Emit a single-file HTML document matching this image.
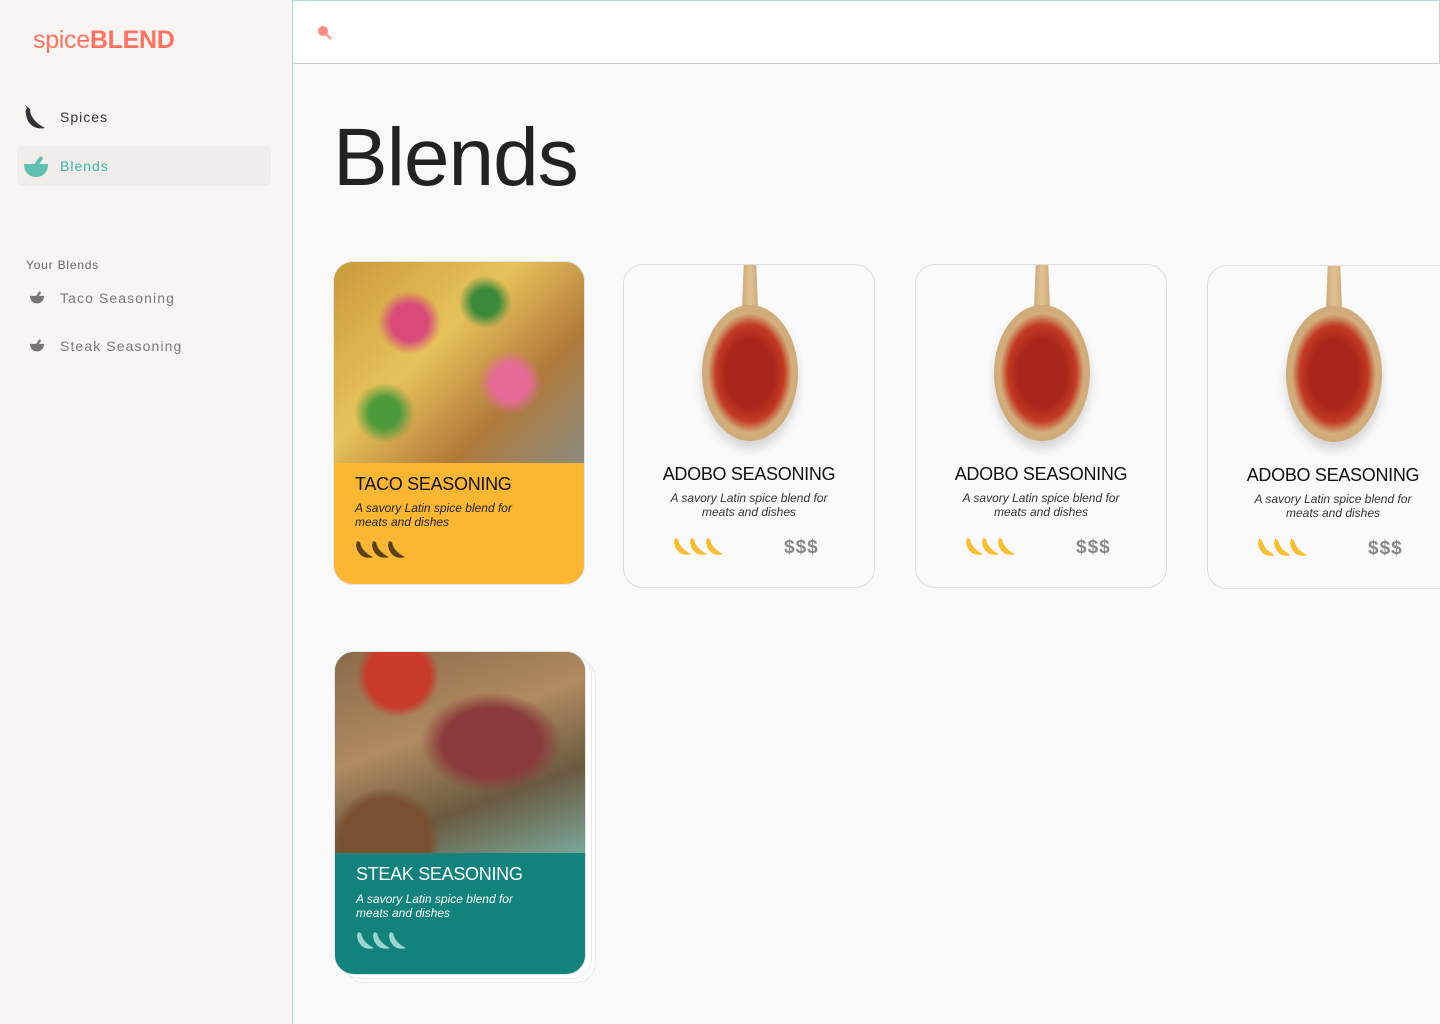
<!DOCTYPE html>
<html><head><meta charset="utf-8"><style>
*{box-sizing:border-box;margin:0;padding:0}
body{width:1440px;height:1024px;overflow:hidden;background:#F9F9F9;font-family:"Liberation Sans",Arial,sans-serif;position:relative}
.side{position:absolute;left:0;top:0;width:293px;height:1024px;background:#F8F5F3;border-right:1px solid #A6DCD9}
.logo{position:absolute;left:33px;top:26px;font-size:25px;color:#FF7262;letter-spacing:-0.3px}
.logo b{font-weight:bold}
.nav{position:absolute;left:17px;width:254px;height:40px;border-radius:4px;display:flex;align-items:center;font-size:14px;letter-spacing:1px}
.nav span{position:absolute;left:43px}
.sub{position:absolute;left:60px;font-size:14px;color:#7a7a7a;letter-spacing:1.1px}
.search{position:absolute;left:293px;top:0;width:1147px;height:64px;background:#fff;border-top:1px solid #A6DCD9;border-right:1px solid #ccc;border-bottom:1px solid #ccc}
h1{position:absolute;left:333px;top:111px;font-size:82px;font-weight:normal;color:#222;letter-spacing:-1px}
.card{position:absolute;width:252px;height:324px;border-radius:20px;overflow:hidden;border:1px solid #ddd;background:#FAFAFA}
.card .t{position:absolute;left:0;width:100%;text-align:center;font-size:18px;color:#111;letter-spacing:-0.3px}
.card .d{position:absolute;left:0;width:100%;text-align:center;font-size:12px;font-style:italic;color:#333;line-height:14px}
.img .t,.img .d{text-align:left;left:21px}
.spoon{position:absolute;left:76px;top:0;width:100px;height:180px}
.dol{position:absolute;left:160px;font-size:19px;font-weight:bold;color:#888;letter-spacing:1px}
.chs{position:absolute;left:50px}
</style></head><body>
<div class="side">
 <div class="logo">spice<b>BLEND</b></div>
 <div class="nav" style="top:97px;color:#333">
  <svg style="position:absolute;left:6px" width="24" height="26" viewBox="0 0 24 26"><path d="M2 1 L7 5 C7 12 12 19 22 24 C13 26 4 21 3 10 C2 7 3 5 4 5 Z" fill="#333"/></svg><span>Spices</span></div>
 <div class="nav" style="top:146px;background:#F0EDEA;color:#3BB4A4">
  <svg style="position:absolute;left:6px" width="26" height="24" viewBox="0 0 26 24"><path d="M1 10 H25 C25 18 20 23 13 23 C6 23 1 18 1 10Z" fill="#5EC0B1"/><rect x="14" y="2" width="4" height="11" rx="2" transform="rotate(35 16 7)" fill="#5EC0B1"/></svg><span>Blends</span></div>
 <div style="position:absolute;left:26px;top:258px;font-size:12px;color:#666;letter-spacing:.8px">Your Blends</div>
 <svg style="position:absolute;left:29px;top:290px" width="16" height="14" viewBox="0 0 26 24"><path d="M1 10 H25 C25 18 20 23 13 23 C6 23 1 18 1 10Z" fill="#777"/><rect x="14" y="2" width="4" height="11" rx="2" transform="rotate(35 16 7)" fill="#777"/></svg>
 <div class="sub" style="top:290px">Taco Seasoning</div>
 <svg style="position:absolute;left:29px;top:338px" width="16" height="14" viewBox="0 0 26 24"><path d="M1 10 H25 C25 18 20 23 13 23 C6 23 1 18 1 10Z" fill="#777"/><rect x="14" y="2" width="4" height="11" rx="2" transform="rotate(35 16 7)" fill="#777"/></svg>
 <div class="sub" style="top:338px">Steak Seasoning</div>
</div>
<div class="search"><svg style="position:absolute;left:23px;top:23px" width="18" height="18" viewBox="0 0 18 18"><circle cx="7" cy="7" r="5" fill="#FF8A7E"/><path d="M10 10 L15 15" stroke="#FF8A7E" stroke-width="2"/></svg></div>
<h1>Blends</h1>

<!-- taco -->
<div class="card img" style="left:333px;top:261px;background:#FBB732;border-color:#e5e5e5">
 <div style="position:absolute;left:0;top:0;width:252px;height:201px;background:radial-gradient(circle at 30% 30%,#d94a7a 0 8%,transparent 14%),radial-gradient(circle at 70% 60%,#e86a9a 0 8%,transparent 15%),radial-gradient(circle at 60% 20%,#3a8a3a 0 6%,transparent 12%),radial-gradient(circle at 20% 75%,#4c9a3a 0 6%,transparent 12%),linear-gradient(135deg,#c89a3a,#e7c25a 40%,#b07a3a 70%,#8a8a80)"></div>
 <div class="t" style="top:212px">TACO SEASONING</div>
 <div class="d" style="top:239px;color:#222">A savory Latin spice blend for<br>meats and dishes</div>
 <svg style="position:absolute;left:22px;top:278px" width="52" height="20" viewBox="0 0 52 20"><g fill="#5a4016"><path d="M1 1 L4 2 C5 8 9 13 17 17 C8 20 1 14 0 5Z"/><path d="M17 1 L20 2 C21 8 25 13 33 17 C24 20 17 14 16 5Z"/><path d="M33 1 L36 2 C37 8 41 13 49 17 C40 20 33 14 32 5Z"/></g></svg>
</div>

<!-- adobo cards -->
<div class="card" style="left:623px;top:264px">
 <div class="spoon"><div style="position:absolute;left:41px;top:0;width:18px;height:70px;background:linear-gradient(90deg,#c9a574,#e2c394,#c9a574);clip-path:polygon(15% 0,85% 0,100% 100%,0 100%)"></div><div style="position:absolute;left:2px;top:40px;width:96px;height:136px;border-radius:50%;background:radial-gradient(ellipse,#a8261a 0 35%,#c23a22 50%,#D2AE7C 62%,#c8a070 100%);box-shadow:0 8px 10px rgba(0,0,0,.15)"></div></div>
 <div class="t" style="top:199px">ADOBO SEASONING</div><div class="d" style="top:226px">A savory Latin spice blend for<br>meats and dishes</div>
 <svg class="chs" style="top:272px" width="52" height="20" viewBox="0 0 52 20"><g fill="#F9BE2E"><path d="M1 1 L4 2 C5 8 9 13 17 17 C8 20 1 14 0 5Z"/><path d="M17 1 L20 2 C21 8 25 13 33 17 C24 20 17 14 16 5Z"/><path d="M33 1 L36 2 C37 8 41 13 49 17 C40 20 33 14 32 5Z"/></g></svg>
 <div class="dol" style="top:272px">$$$</div>
</div>
<div class="card" style="left:915px;top:264px">
 <div class="spoon"><div style="position:absolute;left:41px;top:0;width:18px;height:70px;background:linear-gradient(90deg,#c9a574,#e2c394,#c9a574);clip-path:polygon(15% 0,85% 0,100% 100%,0 100%)"></div><div style="position:absolute;left:2px;top:40px;width:96px;height:136px;border-radius:50%;background:radial-gradient(ellipse,#a8261a 0 35%,#c23a22 50%,#D2AE7C 62%,#c8a070 100%);box-shadow:0 8px 10px rgba(0,0,0,.15)"></div></div>
 <div class="t" style="top:199px">ADOBO SEASONING</div><div class="d" style="top:226px">A savory Latin spice blend for<br>meats and dishes</div>
 <svg class="chs" style="top:272px" width="52" height="20" viewBox="0 0 52 20"><g fill="#F9BE2E"><path d="M1 1 L4 2 C5 8 9 13 17 17 C8 20 1 14 0 5Z"/><path d="M17 1 L20 2 C21 8 25 13 33 17 C24 20 17 14 16 5Z"/><path d="M33 1 L36 2 C37 8 41 13 49 17 C40 20 33 14 32 5Z"/></g></svg>
 <div class="dol" style="top:272px">$$$</div>
</div>
<div class="card" style="left:1207px;top:265px">
 <div class="spoon"><div style="position:absolute;left:41px;top:0;width:18px;height:70px;background:linear-gradient(90deg,#c9a574,#e2c394,#c9a574);clip-path:polygon(15% 0,85% 0,100% 100%,0 100%)"></div><div style="position:absolute;left:2px;top:40px;width:96px;height:136px;border-radius:50%;background:radial-gradient(ellipse,#a8261a 0 35%,#c23a22 50%,#D2AE7C 62%,#c8a070 100%);box-shadow:0 8px 10px rgba(0,0,0,.15)"></div></div>
 <div class="t" style="top:199px">ADOBO SEASONING</div><div class="d" style="top:226px">A savory Latin spice blend for<br>meats and dishes</div>
 <svg class="chs" style="top:272px" width="52" height="20" viewBox="0 0 52 20"><g fill="#F9BE2E"><path d="M1 1 L4 2 C5 8 9 13 17 17 C8 20 1 14 0 5Z"/><path d="M17 1 L20 2 C21 8 25 13 33 17 C24 20 17 14 16 5Z"/><path d="M33 1 L36 2 C37 8 41 13 49 17 C40 20 33 14 32 5Z"/></g></svg>
 <div class="dol" style="top:272px">$$$</div>
</div>

<!-- steak stack -->
<div class="card" style="left:344px;top:659px;height:324px;background:#fff;border-color:#e8e8e8"></div>
<div class="card" style="left:340px;top:655px;height:324px;background:#fff;border-color:#e8e8e8"></div>
<div class="card img" style="left:334px;top:651px;background:#11827C;border-color:#e5e5e5">
 <div style="position:absolute;left:0;top:0;width:252px;height:201px;background:radial-gradient(ellipse at 62% 45%,#8a3a3a 0 22%,transparent 32%),radial-gradient(circle at 25% 12%,#c83a2a 0 12%,transparent 16%),radial-gradient(circle at 20% 95%,#7a5030 0 16%,transparent 20%),linear-gradient(160deg,#8a6a4a,#b08a60 40%,#6a5a40 70%,#7aa89a)"></div>
 <div class="t" style="top:212px;color:#fff">STEAK SEASONING</div>
 <div class="d" style="top:240px;color:#fff">A savory Latin spice blend for<br>meats and dishes</div>
 <svg style="position:absolute;left:22px;top:279px" width="52" height="20" viewBox="0 0 52 20"><g fill="#9ED4D4"><path d="M1 1 L4 2 C5 8 9 13 17 17 C8 20 1 14 0 5Z"/><path d="M17 1 L20 2 C21 8 25 13 33 17 C24 20 17 14 16 5Z"/><path d="M33 1 L36 2 C37 8 41 13 49 17 C40 20 33 14 32 5Z"/></g></svg>
</div>
</body></html>
